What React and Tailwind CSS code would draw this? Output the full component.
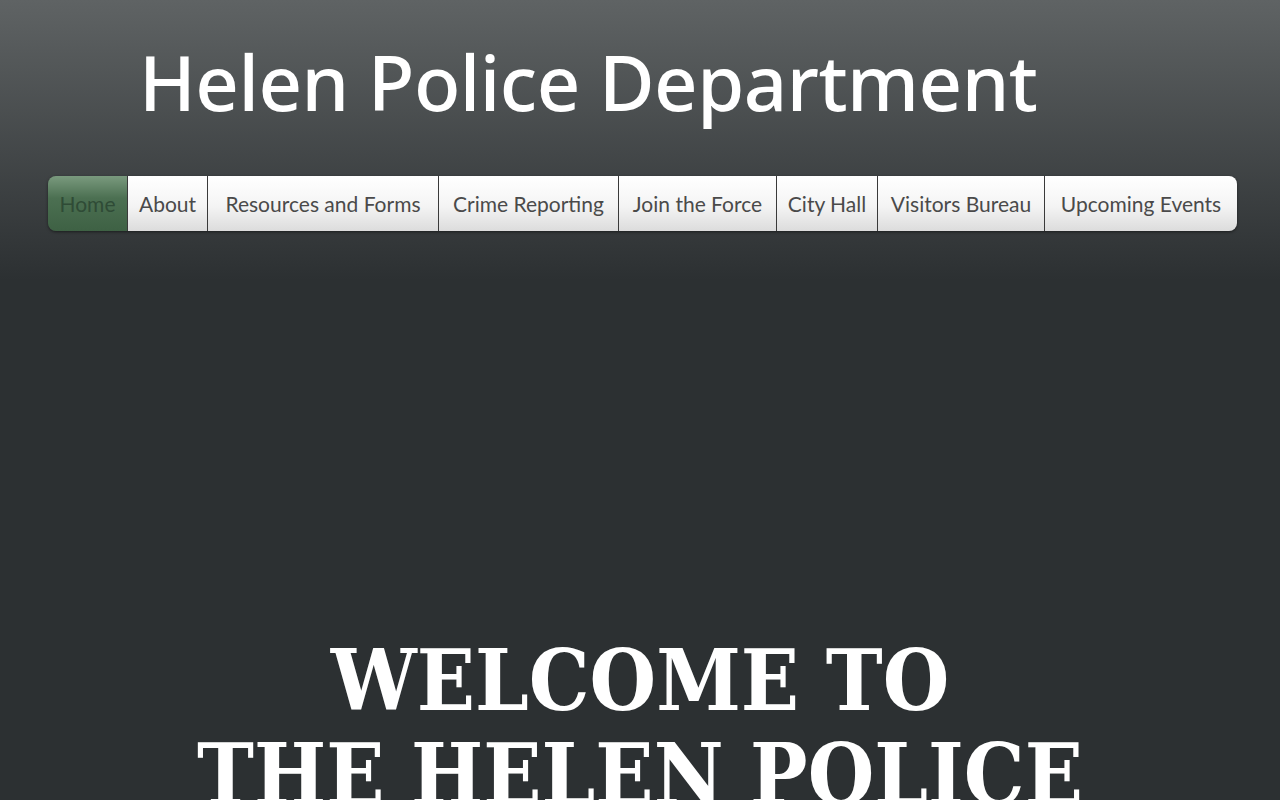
const links = [
  ['Home', 'w-[79px]'],
  ['About', 'w-[80px]'],
  ['Resources and Forms', 'w-[231px]'],
  ['Crime Reporting', 'w-[180px]'],
  ['Join the Force', 'w-[158px]'],
  ['City Hall', 'w-[101px]'],
  ['Visitors Bureau', 'w-[167px]'],
  ['Upcoming Events', 'w-[193px]'],
];

export default function App() {
  return (
    <div className="min-h-[800px] bg-[#2c3032] bg-[linear-gradient(to_bottom,#5f6364_0px,#2c3032_280px,#2c3032_100%)] overflow-hidden">
      <header className="pt-[36px] pl-[139px]">
        <h1 className="text-white text-[76px] leading-[92px] font-medium tracking-[-0.5px]" style={{ fontFamily: '"Noto Sans", sans-serif' }}>
          Helen Police Department
        </h1>
      </header>
      <nav className="mt-[48px] ml-[48px] w-[1189px]">
        <ul className="flex h-[55px] rounded-[8px] overflow-hidden shadow-[0_1px_3px_rgba(0,0,0,0.5)]" style={{ fontFamily: 'Lato, sans-serif' }}>
          {links.map(([l, w], i) => (
            <li
              key={l}
              className={
                i === 0
                  ? `${w} shrink-0 flex items-center justify-center bg-[linear-gradient(to_bottom,#7a9a7e,#4c7052_40%,#3e6144)] text-[#2f4b36] text-[21px]`
                  : `${w} shrink-0 flex items-center justify-center bg-[linear-gradient(to_bottom,#ffffff,#f4f4f4_55%,#dcdcdc)] text-[#4a4a4a] text-[21px] border-l border-[#3a3a3a]`
              }
            >
              {l}
            </li>
          ))}
        </ul>
      </nav>
      <section className="mt-[402px] text-center">
        <h2 className="text-white text-[85px] leading-[94px] font-bold" style={{ fontFamily: '"DejaVu Serif Condensed", "DejaVu Serif", serif', fontStretch: 'condensed' }}>
          WELCOME TO
          <br />
          THE HELEN POLICE
        </h2>
      </section>
    </div>
  );
}
